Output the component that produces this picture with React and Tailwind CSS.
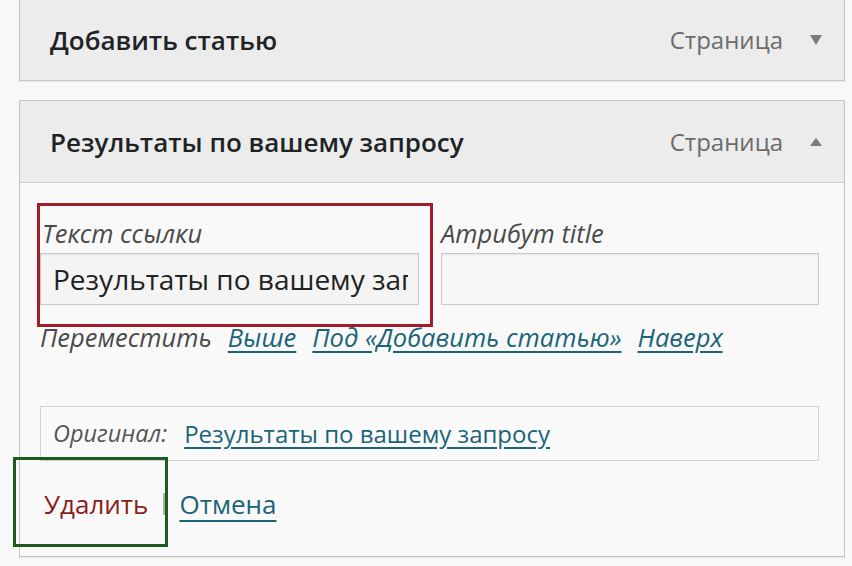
import { useState } from 'react';

function Triangle({ up }) {
  return (
    <svg width="14" height="12" viewBox="0 0 14 12" className="shrink-0">
      {up ? <path d="M7 2 L13 10 L1 10 Z" fill="#7b7b7b" /> : <path d="M1 1 L13 1 L7 11 Z" fill="#7b7b7b" />}
    </svg>
  );
}

function PanelHeader({ title, up, className }) {
  return (
    <div className={`flex items-center justify-between bg-[#ececec] pl-[30px] pr-[21px] ${className}`}>
      <span className="text-[26px] font-semibold text-[#202326] leading-none">{title}</span>
      <div className="flex items-center gap-[26px]">
        <span className="text-[24px] text-[#6c6c6c] leading-none">Страница</span>
        <Triangle up={up} />
      </div>
    </div>
  );
}

export default function App() {
  const [linkText, setLinkText] = useState('Результаты по вашему запросу');
  const [titleAttr, setTitleAttr] = useState('');

  return (
    <div className="w-[852px] h-[566px] overflow-hidden bg-[#f8f8f8] font-['Open_Sans',sans-serif]">
      <div className="ml-[19px] w-[826px]">
        <PanelHeader
          title="Добавить статью"
          className="h-[81px] border-x border-b border-[#c6c6c6] shadow-[0_1px_1px_rgba(0,0,0,0.06)]"
        />

        <div className="mt-[19px] border border-[#c6c6c6] shadow-[0_1px_1px_rgba(0,0,0,0.06)]">
          <PanelHeader title="Результаты по вашему запросу" up className="h-[82px] border-b border-[#cfcfcf]" />

          <div className="relative bg-[#f9f9f9] pl-[20px] pr-[25px] pt-[35px] pb-[37px]">
            <div className="grid grid-cols-[379px_378px] gap-x-[22px]">
              <label className="flex flex-col">
                <span className="italic text-[25.5px] leading-[30px] text-[#4a4a4a] pl-[2px]">Текст ссылки</span>
                <input
                  value={linkText}
                  onChange={(e) => setLinkText(e.target.value)}
                  className="mt-[5px] h-[52px] w-full border border-[#c9c9c9] bg-[#f4f4f4] pl-[12px] pr-[10px] text-[28px] text-[#222] outline-none shadow-[inset_0_1px_2px_rgba(0,0,0,0.07)]"
                />
              </label>
              <label className="flex flex-col">
                <span className="italic text-[25.5px] leading-[30px] text-[#4a4a4a]">Атрибут title</span>
                <input
                  value={titleAttr}
                  onChange={(e) => setTitleAttr(e.target.value)}
                  className="mt-[5px] h-[52px] w-full border border-[#c9c9c9] bg-[#f7f7f7] px-[12px] text-[28px] text-[#222] outline-none shadow-[inset_0_1px_2px_rgba(0,0,0,0.07)]"
                />
              </label>
            </div>

            <div className="mt-[17px] flex items-center gap-[16px] italic text-[25.5px] leading-[30px] text-[#4a4a4a]">
              <span>Переместить</span>
              <a href="#" className="text-[#1b6478] underline underline-offset-[4px]">Выше</a>
              <a href="#" className="text-[#1b6478] underline underline-offset-[4px]">Под «Добавить статью»</a>
              <a href="#" className="text-[#1b6478] underline underline-offset-[4px]">Наверх</a>
            </div>

            <div className="mt-[54px] flex h-[55px] items-center gap-[17px] border border-[#d3d3d3] bg-[#fafafa] pl-[12px]">
              <span className="italic text-[23.5px] text-[#555]">Оригинал:</span>
              <a href="#" className="text-[24px] text-[#1b6478] underline underline-offset-[4px]">Результаты по вашему запросу</a>
            </div>

            <div className="mt-[28px] flex items-center text-[26px] leading-[30px]">
              <a href="#" className="pl-[4px] text-[#8a1f1f]">Удалить</a>
              <span className="ml-[15px] mr-[13px] h-[22px] w-[3px] bg-[#a7b39a]" />
              <a href="#" className="text-[#1b6478] underline underline-offset-[6px]">Отмена</a>
            </div>

            <div className="pointer-events-none absolute left-[17px] top-[20px] h-[124px] w-[396px] border-[3px] border-[#a11d2b]" />
            <div className="pointer-events-none absolute left-[-7px] top-[274px] h-[90px] w-[155px] border-[3px] border-[#1c5a20]" />
          </div>
        </div>
      </div>
    </div>
  );
}
